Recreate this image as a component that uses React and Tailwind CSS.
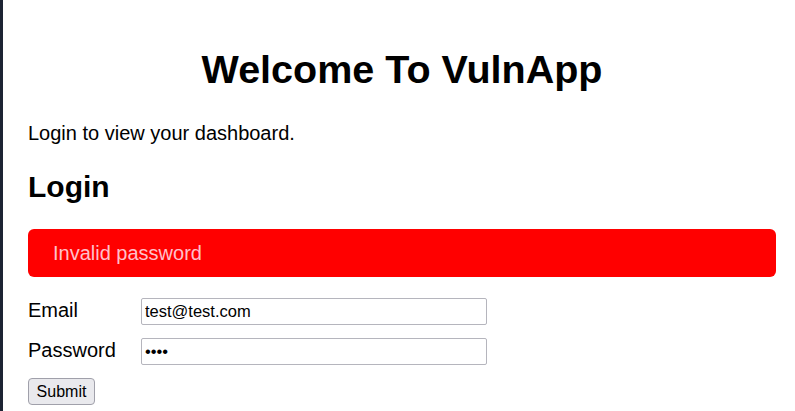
import React from "react";

export default function App() {
    return (
        <div className="flex min-h-screen bg-white text-black font-['Liberation_Sans',Arial,sans-serif]">
            <div className="w-[3px] shrink-0 bg-[#1c2333]" />
            <div className="flex-1 pl-[25px] pr-[19px]">
                <h1 className="mt-[47px] text-center text-[39.5px] leading-[45px] font-bold">
                    Welcome To VulnApp
                </h1>
                <p className="mt-[30px] text-[20px] leading-[23px]">Login to view your dashboard.</p>
                <h2 className="mt-[25px] text-[30px] leading-[34px] font-bold">Login</h2>

                <div className="mt-[25px] h-[48px] rounded-[6px] bg-[#ff0000] pl-[25px] text-[20px] leading-[48px] text-[#ffc0cb]">
                    Invalid password
                </div>

                <form className="mt-[21px] flex flex-col gap-[13px]">
                    <div className="flex items-start">
                        <label className="w-[113px] text-[20px] leading-[25px]">Email</label>
                        <input
                            type="text"
                            defaultValue="test@test.com"
                            className="h-[27px] w-[346px] rounded-[2px] border border-[#b5b5bd] bg-white px-[3px] text-[16.5px] outline-none"
                        />
                    </div>
                    <div className="flex items-start">
                        <label className="w-[113px] text-[20px] leading-[25px]">Password</label>
                        <input
                            type="password"
                            defaultValue="test"
                            className="h-[27px] w-[346px] rounded-[2px] border border-[#b5b5bd] bg-white px-[3px] text-[16.5px] outline-none"
                        />
                    </div>
                    <div>
                        <button
                            type="button"
                            className="h-[27px] w-[67px] rounded-[4px] border border-[#a0a0aa] bg-[#e9e9ed] text-[16px]"
                        >
                            Submit
                        </button>
                    </div>
                </form>
            </div>
        </div>
    );
}
